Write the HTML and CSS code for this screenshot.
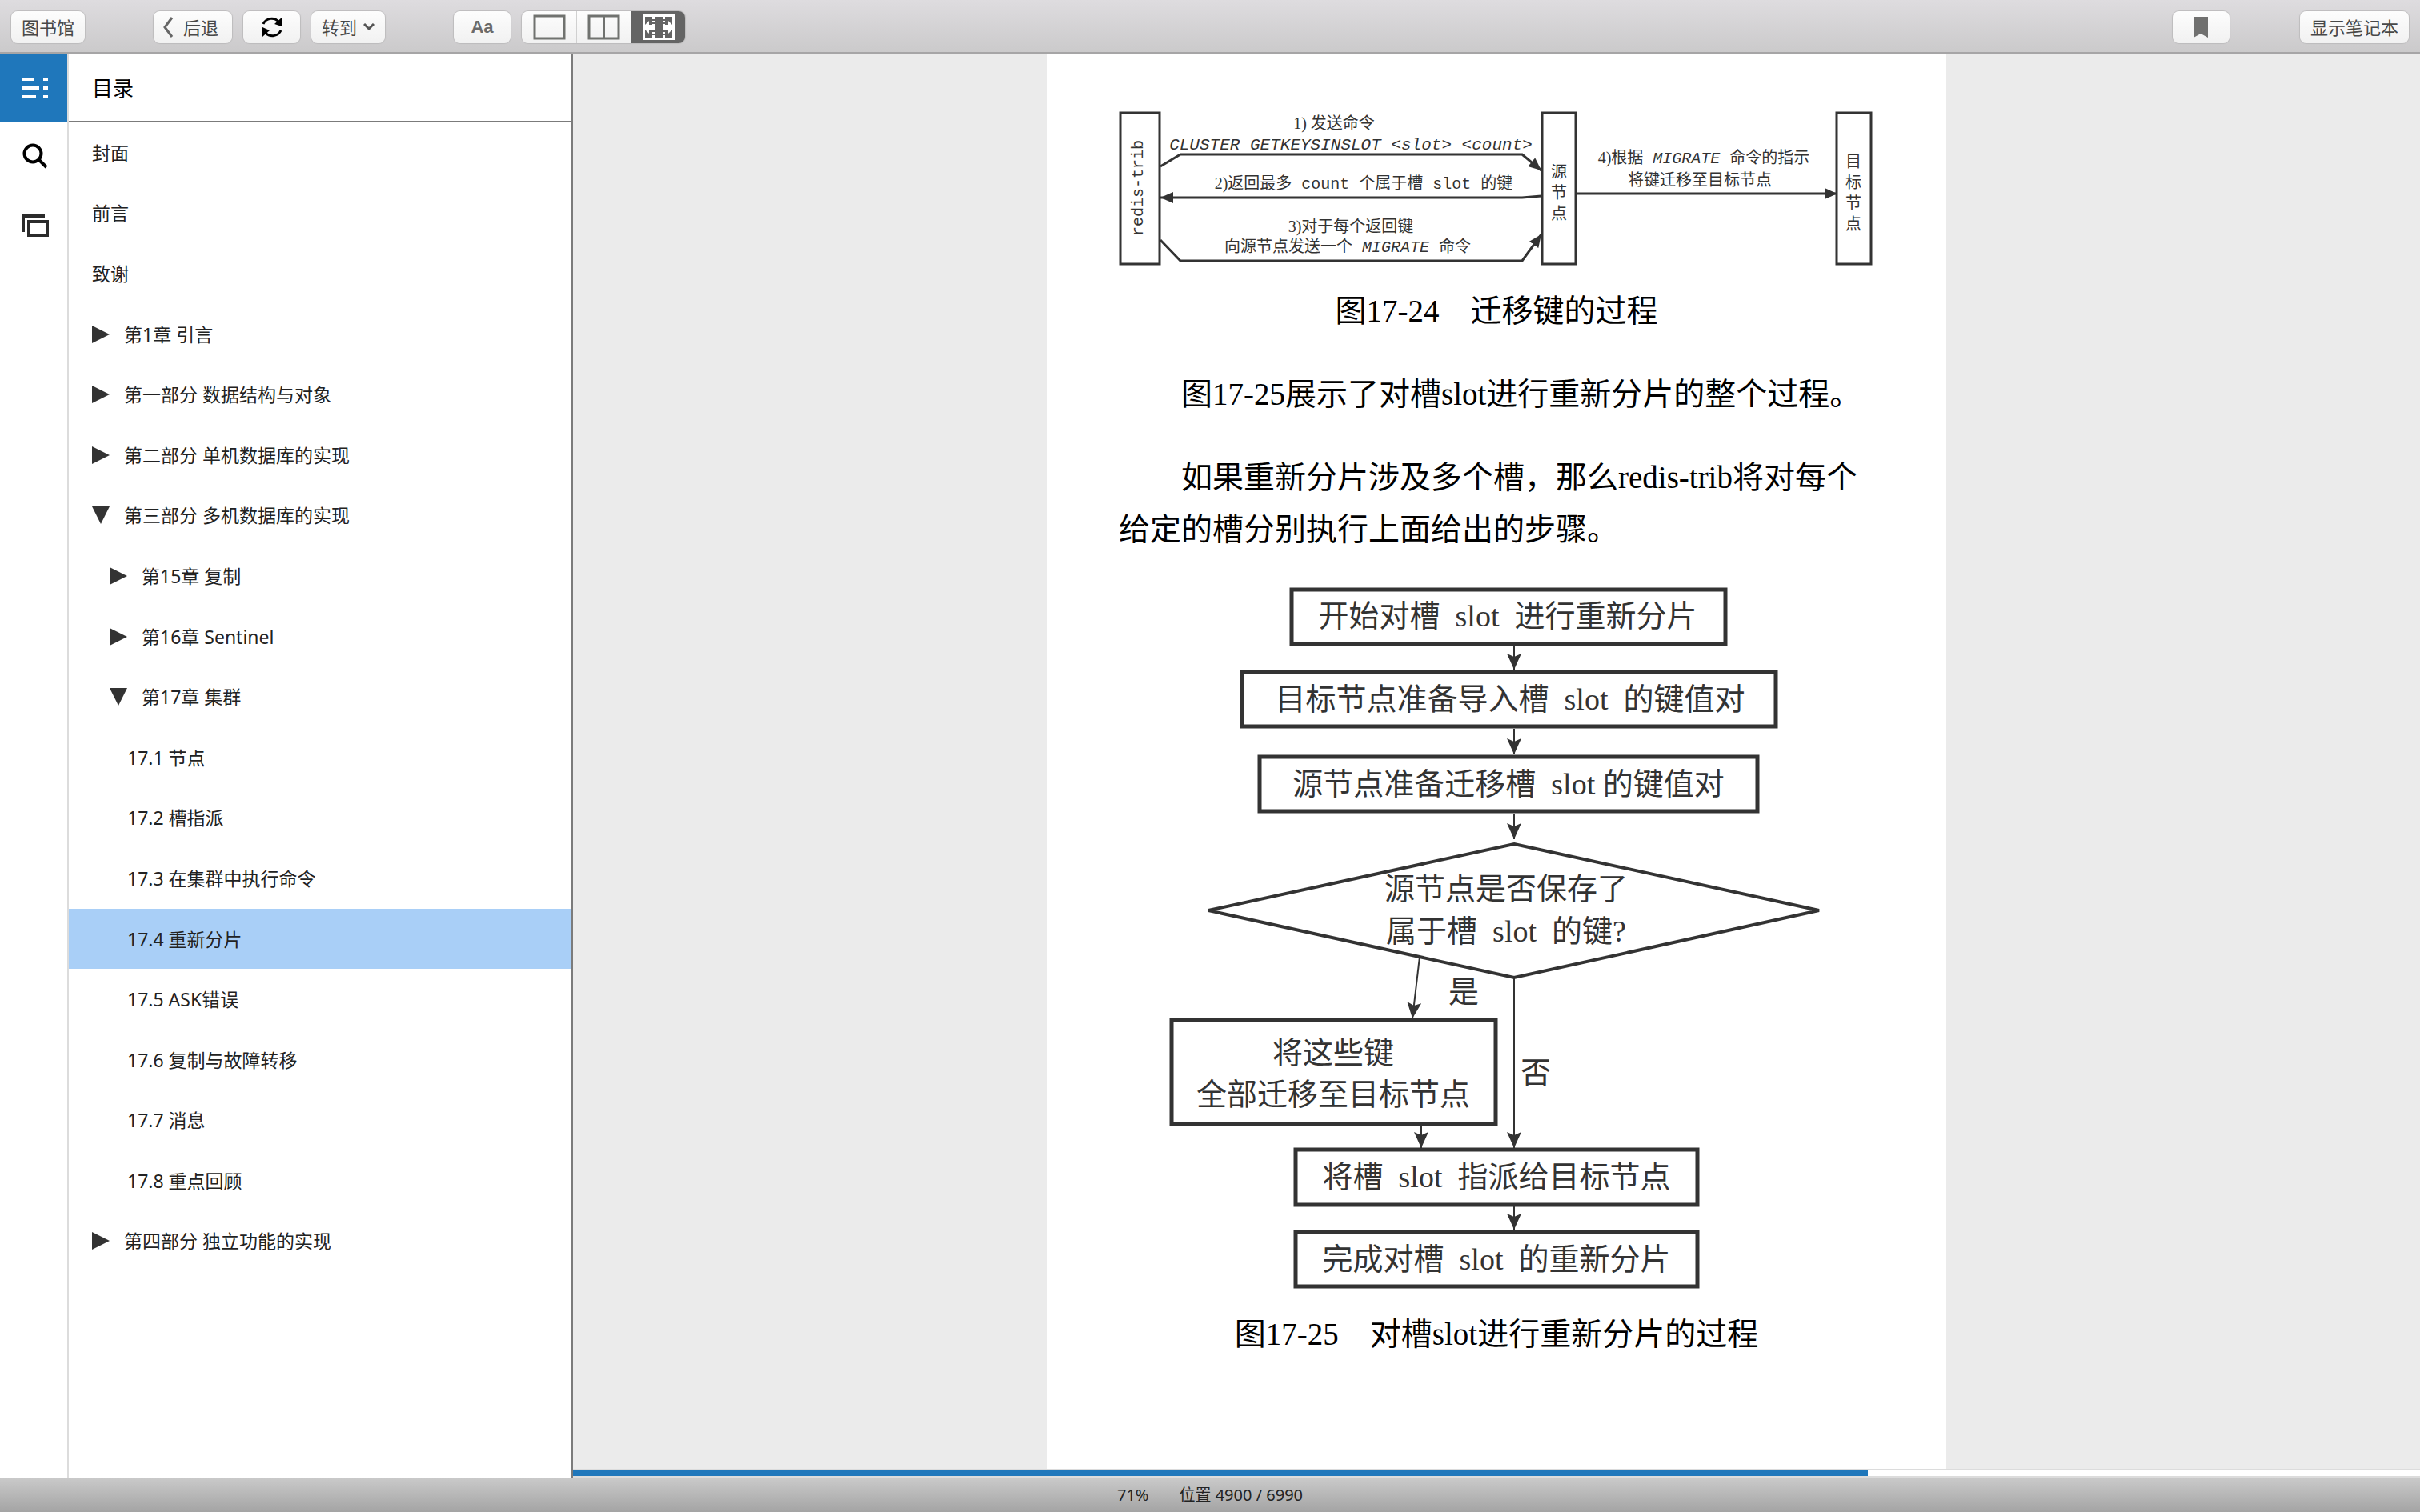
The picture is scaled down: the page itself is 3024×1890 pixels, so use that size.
FILE: index.html
```html
<!DOCTYPE html>
<html lang="zh-CN">
<head>
<meta charset="utf-8">
<meta name="viewport" content="width=device-width, initial-scale=1">
<title>17.4 重新分片</title>
<link rel="stylesheet" href="styles.css">
</head>
<body>
<header class="toolbar">
  <button class="btn" type="button">图书馆</button>
  <div class="btn-group">
    <button class="btn btn-back" type="button"><svg width="14" height="32" viewBox="0 0 14 32" fill="none" stroke="#666" stroke-width="3"><path d="M12 4 3 16l9 12"/></svg>后退</button>
    <button class="btn" type="button" aria-label="同步"><svg width="28" height="28" viewBox="0 0 28 28"><path d="M3 10a11.500 11.500 0 0 1 19-3M25 18a11.500 11.500 0 0 1-19 3" fill="none" stroke="#000" stroke-width="3"/><path d="M26 2v11l-9-3zM2 26V14l9 4z"/></svg></button>
    <button class="btn btn-goto" type="button">转到<svg width="14" height="10" viewBox="0 0 14 10" fill="none" stroke="#555" stroke-width="3"><path d="m1 1 6 6 6-6"/></svg></button>
  </div>
  <div class="btn-group">
    <button class="btn btn-font" type="button">Aa</button>
    <div class="segments">
      <button class="segment" type="button" aria-label="单栏"><svg width="41" height="32" viewBox="0 0 41 32" fill="none" stroke="#70726f" stroke-width="3"><path d="M2 2h37v28H2z"/></svg></button>
      <button class="segment" type="button" aria-label="双栏"><svg width="41" height="32" viewBox="0 0 41 32" fill="none" stroke="#70726f" stroke-width="3"><path d="M2 2h37v28H2zM20.500 2v28"/></svg></button>
      <button class="segment segment-on" type="button" aria-label="自动分栏"><svg width="40" height="32" viewBox="0 0 40 32"><path d="M0 0h40v32H0z" fill="#fff"/><path d="M3 3h9v26H3zM15 3h10v26H15zM28 3h9v26h-9z" fill="#646464"/><path d="M12 7h3M12 11h3M12 21h3M12 25h3M25 7h3M25 11h3M25 21h3M25 25h3" stroke="#646464" stroke-width="2"/><path d="m0 16 8-8v5h7v6H8v5zM40 16l-8-8v5h-7v6h7v5z" fill="#fff"/></svg></button>
    </div>
  </div>
  <div class="btn-ends">
    <button class="btn" type="button" aria-label="书签"><svg width="18" height="26" viewBox="0 0 18 26"><path d="M0 0h18v26l-9-5-9 5z" fill="#70706f"/></svg></button>
    <button class="btn" type="button">显示笔记本</button>
  </div>
</header>

<div class="workspace">
  <div class="rail">
    <button class="rail-btn rail-btn-on" type="button" aria-label="目录"><svg width="34" height="28" viewBox="0 0 34 28" fill="#fff"><path d="M0 1h16v4H0zM0 12h22v4H0zM0 23h18v4H0zM27 1h6v4h-6zM27 12h6v4h-6zM27 23h6v4h-6z"/></svg></button>
    <button class="rail-btn" type="button" aria-label="搜索"><svg width="34" height="34" viewBox="0 0 34 34" fill="none" stroke="#000" stroke-width="4"><circle cx="14" cy="13" r="10.500"/><path d="m21 20 10 10"/></svg></button>
    <button class="rail-btn" type="button" aria-label="卡片"><svg width="34" height="28" viewBox="0 0 34 28" fill="none" stroke="#2b2b2b" stroke-width="4"><path d="M2 22V2h27M9 9h23v17H9z"/></svg></button>
  </div>

  <nav class="toc" aria-labelledby="toc-title">
    <h2 class="toc-title" id="toc-title">目录</h2>
    <ul class="toc-list">
      <li><a href="#cover">封面</a></li>
      <li><a href="#preface">前言</a></li>
      <li><a href="#thanks">致谢</a></li>
      <li><a href="#c1"><svg class="tri" viewBox="0 0 22 22"><path d="M0 0v22l22-11z"/></svg>第1章 引言</a></li>
      <li><a href="#p1"><svg class="tri" viewBox="0 0 22 22"><path d="M0 0v22l22-11z"/></svg>第一部分 数据结构与对象</a></li>
      <li><a href="#p2"><svg class="tri" viewBox="0 0 22 22"><path d="M0 0v22l22-11z"/></svg>第二部分 单机数据库的实现</a></li>
      <li><a href="#p3"><svg class="tri" viewBox="0 0 22 22"><path d="M0 0h22L11 22z"/></svg>第三部分 多机数据库的实现</a>
        <ul class="toc-chapters">
          <li><a href="#c15"><svg class="tri" viewBox="0 0 22 22"><path d="M0 0v22l22-11z"/></svg>第15章 复制</a></li>
          <li><a href="#c16"><svg class="tri" viewBox="0 0 22 22"><path d="M0 0v22l22-11z"/></svg>第16章 Sentinel</a></li>
          <li><a href="#c17"><svg class="tri" viewBox="0 0 22 22"><path d="M0 0h22L11 22z"/></svg>第17章 集群</a>
            <ul class="toc-sections">
              <li><a href="#s1">17.1 节点</a></li>
              <li><a href="#s2">17.2 槽指派</a></li>
              <li><a href="#s3">17.3 在集群中执行命令</a></li>
              <li><a href="#s4" class="current" aria-current="true">17.4 重新分片</a></li>
              <li><a href="#s5">17.5 ASK错误</a></li>
              <li><a href="#s6">17.6 复制与故障转移</a></li>
              <li><a href="#s7">17.7 消息</a></li>
              <li><a href="#s8">17.8 重点回顾</a></li>
            </ul>
          </li>
        </ul>
      </li>
      <li><a href="#p4"><svg class="tri" viewBox="0 0 22 22"><path d="M0 0v22l22-11z"/></svg>第四部分 独立功能的实现</a></li>
    </ul>
  </nav>

  <main class="reader">
    <article class="page">
      <figure>
        <svg class="diagram" viewBox="0 0 944 196">
          <defs>
            <marker id="head" viewBox="0 0 16 14" refX="16" refY="7" markerWidth="16" markerHeight="14" markerUnits="userSpaceOnUse" orient="auto"><path d="M0 0l16 7-16 7z" fill="#333"/></marker>
            <marker id="barb" viewBox="0 0 20 18" refX="20" refY="9" markerWidth="20" markerHeight="18" markerUnits="userSpaceOnUse" orient="auto"><path d="M0 0l20 9-20 9 4-9z" fill="#333"/></marker>
          </defs>
          <g fill="none" stroke="#333" stroke-width="3">
            <path d="M2 3h49v189H2zM529 3h42v189h-42zM897 3h43v189h-43z"/>
            <path d="M52 70 77 55H504L528 75" marker-end="url(#head)"/>
            <path d="M528 107 504 109H52" marker-end="url(#head)"/>
            <path d="M52 162 77 188H504L528 155" marker-end="url(#head)"/>
            <path d="M572 104H898" marker-end="url(#head)"/>
          </g>
          <g class="label-small">
            <text x="269" y="23">1) 发送命令</text>
            <text class="mono-title" x="290" y="49">CLUSTER GETKEYSINSLOT &lt;slot&gt; &lt;count&gt;</text>
            <text x="306" y="98">2)返回最多<tspan class="mono"> count </tspan>个属于槽<tspan class="mono"> slot </tspan>的键</text>
            <text x="290" y="152">3)对于每个返回键</text>
            <text x="286" y="177">向源节点发送一个<tspan class="mono italic"> MIGRATE </tspan>命令</text>
            <text x="731" y="66">4)根据<tspan class="mono italic"> MIGRATE </tspan>命令的指示</text>
            <text x="726" y="94">将键迁移至目标节点</text>
            <text class="mono" transform="translate(30 97) rotate(-90)">redis-trib</text>
            <text><tspan x="550" y="84">源</tspan><tspan x="550" y="110">节</tspan><tspan x="550" y="136">点</tspan></text>
            <text><tspan x="918" y="71">目</tspan><tspan x="918" y="97">标</tspan><tspan x="918" y="123">节</tspan><tspan x="918" y="149">点</tspan></text>
          </g>
        </svg>
        <figcaption>图17-24　迁移键的过程</figcaption>
      </figure>

      <p>图17-25展示了对槽slot进行重新分片的整个过程。</p>
      <p>如果重新分片涉及多个槽，那么redis-trib将对每个给定的槽分别执行上面给出的步骤。</p>

      <figure>
        <svg class="diagram" viewBox="0 0 944 880">
          <g fill="none" stroke="#333" stroke-width="5">
            <path d="M216 4h542v68H216zM154 107h667v68H154zM176 213h622v68H176zM66 542h405v130H66zM221 704h502v69H221zM221 807h502v68H221z"/>
            <path d="M494 322 875 405 494 489 112 405z" stroke-width="4"/>
          </g>
          <g fill="none" stroke="#333" stroke-width="2">
            <path d="M494 74v30" marker-end="url(#barb)"/>
            <path d="M494 178v32" marker-end="url(#barb)"/>
            <path d="M494 284v32" marker-end="url(#barb)"/>
            <path d="M376 463 367 540" marker-end="url(#barb)"/>
            <path d="M494 490v212" marker-end="url(#barb)"/>
            <path d="M378 674v28" marker-end="url(#barb)"/>
            <path d="M494 775v29" marker-end="url(#barb)"/>
          </g>
          <g class="label-large">
            <text x="486" y="50">开始对槽&#160;&#160;slot&#160;&#160;进行重新分片</text>
            <text x="489" y="154">目标节点准备导入槽&#160;&#160;slot&#160;&#160;的键值对</text>
            <text x="487" y="260">源节点准备迁移槽&#160;&#160;slot&#160;的键值对</text>
            <text x="484" y="391">源节点是否保存了</text>
            <text x="484" y="444">属于槽&#160;&#160;slot&#160;&#160;的键?</text>
            <text x="431" y="520">是</text>
            <text x="521" y="621">否</text>
            <text x="268" y="596">将这些键</text>
            <text x="268" y="648">全部迁移至目标节点</text>
            <text x="472" y="751">将槽&#160;&#160;slot&#160;&#160;指派给目标节点</text>
            <text x="472" y="854">完成对槽&#160;&#160;slot&#160;&#160;的重新分片</text>
          </g>
        </svg>
        <figcaption>图17-25　对槽slot进行重新分片的过程</figcaption>
      </figure>
    </article>
    <div class="progress" role="progressbar" aria-label="阅读进度" aria-valuenow="4900" aria-valuemax="6990"><div class="progress-fill" style="width:70.1%"></div></div>
  </main>
</div>

<footer class="status"><span>71%</span><span>位置 4900 / 6990</span></footer>
</body>
</html>
```

FILE: styles.css
```css
* {
  box-sizing: border-box;
}

body {
  margin: 0;
  min-height: 100vh;
  display: flex;
  flex-direction: column;
  background: #fff;
  font-family: "Noto Sans", "Noto Sans CJK SC", sans-serif;
  color: #222;
}

button {
  font: inherit;
  margin: 0;
  border: 0;
  cursor: pointer;
}

svg {
  display: block;
  flex: none;
}

/* Toolbar */
.toolbar {
  display: flex;
  align-items: center;
  gap: 86px;
  height: 67px;
  padding: 3px 14px 0;
  background: linear-gradient(#dedcdf, #cbcacb);
  border-bottom: 2px solid #a6a5a6;
}

.btn-group {
  display: flex;
  gap: 14px;
}

.btn-ends {
  display: flex;
  gap: 88px;
  margin-left: auto;
}

.btn {
  display: flex;
  align-items: center;
  justify-content: center;
  min-width: 71px;
  height: 40px;
  padding: 0 13px;
  border-radius: 8px;
  background: linear-gradient(#fdfdfd, #f1f1f1);
  box-shadow: 0 0 1px 1px #bdbcbd;
  color: #484848;
  font-size: 22px;
  line-height: 32px;
  white-space: nowrap;
}

.btn-back {
  gap: 12px;
  padding: 0 17px 0 11px;
}

.btn-goto {
  gap: 8px;
}

.btn-font {
  font-family: "Liberation Sans", sans-serif;
  font-weight: bold;
  color: #6b6b6b;
}

.segments {
  display: flex;
  border-radius: 8px;
  overflow: hidden;
  box-shadow: 0 0 1px 1px #bdbcbd;
}

.segment {
  display: flex;
  align-items: center;
  justify-content: center;
  width: 68px;
  height: 40px;
  padding: 0;
  background: linear-gradient(#fdfdfd, #f1f1f1);
}

.segment + .segment {
  border-left: 1px solid #d0d0d0;
}

.segment.segment-on {
  background: #646464;
  border-left-color: #646464;
}

/* Left rail and table of contents */
.workspace {
  flex: 1;
  display: flex;
}

.rail {
  flex: none;
  width: 86px;
  border-right: 2px solid #dcdcdc;
}

.rail-btn {
  display: flex;
  align-items: center;
  width: 100%;
  height: 86px;
  padding: 0 0 0 27px;
  background: #fff;
}

.rail-btn-on {
  background: #1f77bb;
}

.toc {
  flex: none;
  width: 630px;
  border-right: 2px solid #7b7b7b;
}

.toc-title {
  display: flex;
  align-items: center;
  height: 86px;
  margin: 0;
  padding-left: 29px;
  border-bottom: 2px solid #7b7b7b;
  color: #000;
  font-size: 26px;
  font-weight: normal;
}

.toc ul {
  margin: 0;
  padding: 0;
  list-style: none;
}

.toc a {
  display: flex;
  align-items: center;
  gap: 18px;
  height: 4vh;
  padding-left: 29px;
  color: #222;
  font-size: 23px;
  line-height: 32px;
  text-decoration: none;
}

.toc .toc-chapters a {
  padding-left: 51px;
}

.toc .toc-sections a {
  padding-left: 73px;
}

.toc .current {
  background: #a9cff7;
}

.tri {
  width: 22px;
  height: 22px;
  fill: #333;
}

/* Book page */
.reader {
  flex: 1;
  min-width: 0;
  display: flex;
  flex-direction: column;
  background: #ebebeb;
}

.page {
  flex: 1;
  display: flex;
  flex-direction: column;
  gap: 39px;
  width: 100%;
  max-width: 1124px;
  margin: 0 auto;
  padding: 71px 90px 64px;
  background: #fff;
  color: #000;
  font-family: "Liberation Serif", "Noto Sans CJK SC", serif;
  font-size: 39px;
  line-height: 65px;
}

.page p {
  margin: 0;
  text-indent: 2em;
}

figure {
  display: flex;
  flex-direction: column;
  gap: 22px;
  margin: 0;
}

.diagram {
  width: 100%;
  max-width: 944px;
}

figcaption {
  text-align: center;
}

.label-small,
.label-large {
  fill: #333;
  text-anchor: middle;
}

.label-small {
  font-size: 20px;
}

.label-large {
  font-size: 38px;
}

.mono,
.mono-title {
  font-family: "Liberation Mono", monospace;
}

.mono {
  white-space: pre;
}

.mono-title {
  font-size: 21px;
}

.italic,
.mono-title {
  font-style: italic;
}

.progress {
  height: 11px;
  border-top: 2px solid #dcdcdc;
  border-bottom: 2px solid #dcdcdc;
  background: #fff;
}

.progress-fill {
  height: 100%;
  background: #1f77bb;
}

/* Status bar */
.status {
  display: flex;
  align-items: center;
  justify-content: center;
  gap: 38px;
  height: 43px;
  background: linear-gradient(#cacaca, #a4a4a4);
  font-size: 20px;
  line-height: 28px;
}
```
